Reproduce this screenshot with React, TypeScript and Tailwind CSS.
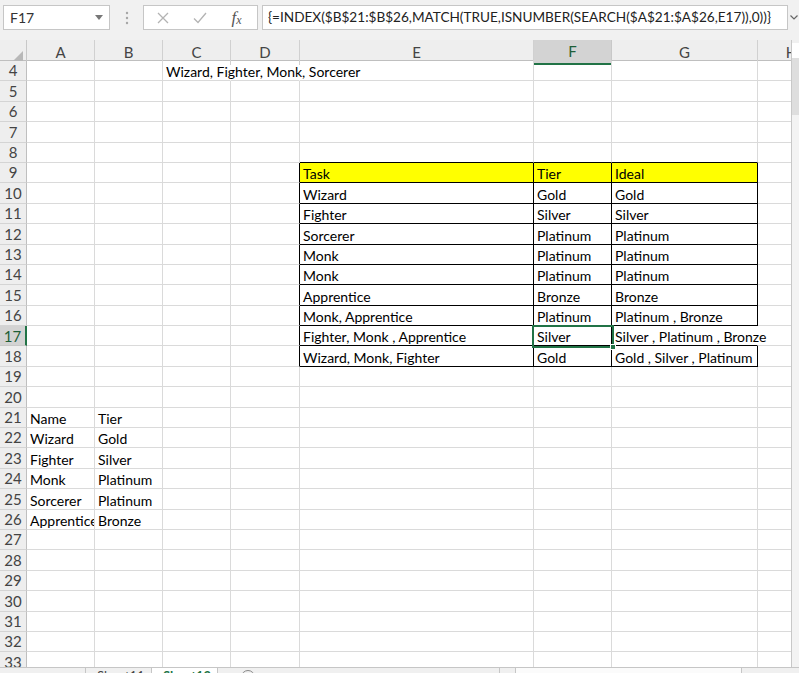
import React from "react";

const COLS = ["A", "B", "C", "D", "E", "F", "G", "H"];
const ROWS = Array.from({ length: 31 }, (_, i) => i + 4);

const DATA: Record<string, string> = {
  C4: "Wizard, Fighter, Monk, Sorcerer",
  E9: "Task",
  F9: "Tier",
  G9: "Ideal",
  E10: "Wizard",
  F10: "Gold",
  G10: "Gold",
  E11: "Fighter",
  F11: "Silver",
  G11: "Silver",
  E12: "Sorcerer",
  F12: "Platinum",
  G12: "Platinum",
  E13: "Monk",
  F13: "Platinum",
  G13: "Platinum",
  E14: "Monk",
  F14: "Platinum",
  G14: "Platinum",
  E15: "Apprentice",
  F15: "Bronze",
  G15: "Bronze",
  E16: "Monk, Apprentice",
  F16: "Platinum",
  G16: "Platinum , Bronze",
  E17: "Fighter, Monk , Apprentice",
  F17: "Silver",
  G17: "Silver , Platinum , Bronze",
  E18: "Wizard, Monk, Fighter",
  F18: "Gold",
  G18: "Gold , Silver , Platinum",
  A21: "Name",
  B21: "Tier",
  A22: "Wizard",
  B22: "Gold",
  A23: "Fighter",
  B23: "Silver",
  A24: "Monk",
  B24: "Platinum",
  A25: "Sorcerer",
  B25: "Platinum",
  A26: "Apprentice",
  B26: "Bronze",
};

const inTable = (c: string, r: number) =>
  (c === "E" || c === "F" || c === "G") && r >= 9 && r <= 18;

const Cell = ({ col, row }: { col: string; row: number }) => {
  const id = col + row;
  const overflow = id === "C4" || id === "G17";
  const noRight = id === "C4" || id === "D4" || id === "G17";

  let right = "border-r-[#dadada]";
  if (noRight) right = "border-r-transparent";
  else if (inTable(col, row) || (col === "D" && row >= 9 && row <= 18))
    right = "border-r-black";

  const bottom =
    inTable(col, row) || ((col === "E" || col === "F" || col === "G") && row === 8)
      ? "border-b-black"
      : "border-b-[#dadada]";

  const yellow = row === 9 && inTable(col, row) ? "bg-[#ffff00]" : "";

  return (
    <div
      className={`flex items-end whitespace-nowrap border-r border-b pl-[3px] leading-[17px] ${right} ${bottom} ${yellow} ${
        overflow ? "relative z-10 overflow-visible" : "overflow-hidden"
      }`}
    >
      {DATA[id] ?? ""}
    </div>
  );
};

const FormulaBar = () => (
  <div className="h-[40px] flex items-start pt-[5px] pl-[3px] bg-[#f1f1f1] text-[#222]">
    <div className="w-[107px] h-[25px] bg-white border border-[#c6c6c6] flex items-center justify-between pl-[6px] pr-[6px] text-[14px] text-[#333]">
      <span>F17</span>
      <svg width="8" height="5" viewBox="0 0 8 5">
        <path d="M0 0h8L4 5z" fill="#777" />
      </svg>
    </div>
    <div className="w-[33px] h-[25px] flex items-center justify-center">
      <svg width="4" height="14" viewBox="0 0 4 14">
        <circle cx="2" cy="2" r="1.2" fill="#a6a6a6" />
        <circle cx="2" cy="7" r="1.2" fill="#a6a6a6" />
        <circle cx="2" cy="12" r="1.2" fill="#a6a6a6" />
      </svg>
    </div>
    <div className="w-[115px] h-[25px] bg-white border border-[#c6c6c6] flex items-center">
      <div className="w-[37px] flex justify-center">
        <svg width="12" height="12" viewBox="0 0 12 12">
          <path d="M1 1l10 10M11 1L1 11" stroke="#b3b3b3" strokeWidth="1.3" />
        </svg>
      </div>
      <div className="w-[37px] flex justify-center">
        <svg width="14" height="12" viewBox="0 0 14 12">
          <path d="M1 6.5l4 4L13 1" stroke="#b3b3b3" strokeWidth="1.3" fill="none" />
        </svg>
      </div>
      <div className="w-[37px] flex justify-center items-end font-['Liberation_Serif',serif] italic text-[#555]">
        <span className="text-[17px] leading-none">f</span>
        <span className="text-[12px] leading-none">x</span>
      </div>
    </div>
    <div className="ml-[4px] w-[526px] h-[25px] bg-white border border-[#c6c6c6] flex items-center pl-[5px] text-[13.6px] text-[#222] whitespace-nowrap overflow-hidden">
      {"{=INDEX($B$21:$B$26,MATCH(TRUE,ISNUMBER(SEARCH($A$21:$A$26,E17)),0))}"}
    </div>
    <div className="w-[11px] h-[25px] flex items-center justify-center">
      <svg width="8" height="5" viewBox="0 0 8 5">
        <path d="M0.5 0.5L4 4l3.5-3.5" stroke="#666" strokeWidth="1.2" fill="none" />
      </svg>
    </div>
  </div>
);

const ColumnHeader = () => (
  <div className="h-[21px] grid grid-cols-[27px_68px_68px_68px_69px_234px_78px_146px_68px] bg-[#eeeeee] border-b border-[#bfbfbf] text-[15px] text-[#444]">
    <div className="relative border-r border-[#c8c8c8]">
      <svg className="absolute right-[3px] bottom-[3px]" width="11" height="11" viewBox="0 0 11 11">
        <path d="M11 0V11H0z" fill="#b8b8b8" />
      </svg>
    </div>
    {COLS.map((c) =>
      c === "F" ? (
        <div
          key={c}
          className="flex items-center justify-center border-r border-r-[#c8c8c8] border-b-2 border-b-[#217346] bg-[#d3d3d3] text-[#1e5e38]"
        >
          {c}
        </div>
      ) : (
        <div key={c} className="flex items-center justify-center border-r border-[#d0d0d0]">
          {c}
        </div>
      )
    )}
  </div>
);

const Sheet = () => (
  <div className="relative h-[606px] overflow-hidden">
    <div className="grid grid-cols-[27px_68px_68px_68px_69px_234px_78px_146px_68px] auto-rows-[20.4px] text-[14px] text-black">
      {ROWS.map((r) => (
        <React.Fragment key={r}>
          {r === 17 ? (
            <div className="flex items-center justify-center border-r-2 border-r-[#217346] border-b border-b-[#c8c8c8] bg-[#d3d3d3] text-[#1e5e38] text-[15px]">
              {r}
            </div>
          ) : (
            <div className="flex items-center justify-center border-r border-r-[#bfbfbf] border-b border-b-[#d4d4d4] bg-[#eeeeee] text-[#444] text-[15px]">
              {r}
            </div>
          )}
          {COLS.map((c) => (
            <Cell key={c} col={c} row={r} />
          ))}
        </React.Fragment>
      ))}
    </div>
    <div className="absolute left-[532px] top-[264px] w-[82px] h-[23px] border-2 border-[#217346] z-20">
      <div className="absolute -right-[4px] -bottom-[4px] w-[6px] h-[6px] bg-[#217346] border border-white" />
    </div>
  </div>
);

const VerticalScroll = () => (
  <div className="w-[8px] flex flex-col border-l border-[#c8c8c8] bg-[#f0f0f0]">
    <div className="h-[3px]" />
    <div className="h-[15px] bg-white" />
    <div className="h-[57px] bg-[#dedede]" />
    <div className="flex-1 bg-[#f3f3f3]" />
  </div>
);

const SheetTabs = () => (
  <div className="h-[30px] flex border-t border-[#c6c6c6] bg-[#f0f0f0] text-[13px] leading-[14px]">
    <div className="w-[86px] border-r border-[#c6c6c6]" />
    <div className="w-[66px] border-r border-[#c6c6c6] pl-[11px] pt-[1px] text-[#444]">Sheet11</div>
    <div className="w-[66px] bg-white border-r border-[#c6c6c6] pl-[11px] pt-[1px] font-bold text-[#217346]">
      Sheet12
    </div>
    <div className="w-[60px] flex justify-center pt-[2px]">
      <div className="w-[14px] h-[14px] rounded-full border border-[#888]" />
    </div>
    <div className="w-[222px] border-r border-[#c6c6c6]" />
    <div className="w-[16px] border-r border-[#c6c6c6]" />
    <div className="w-[226px] bg-[#fbfbfb] border-r border-[#c6c6c6]" />
    <div className="flex-1" />
  </div>
);

export default function App() {
  return (
    <div className="w-[799px] h-[673px] overflow-hidden bg-white font-['Lato',sans-serif]">
      <FormulaBar />
      <div className="flex">
        <div className="w-[791px] overflow-hidden">
          <ColumnHeader />
          <Sheet />
        </div>
        <VerticalScroll />
      </div>
      <SheetTabs />
    </div>
  );
}
